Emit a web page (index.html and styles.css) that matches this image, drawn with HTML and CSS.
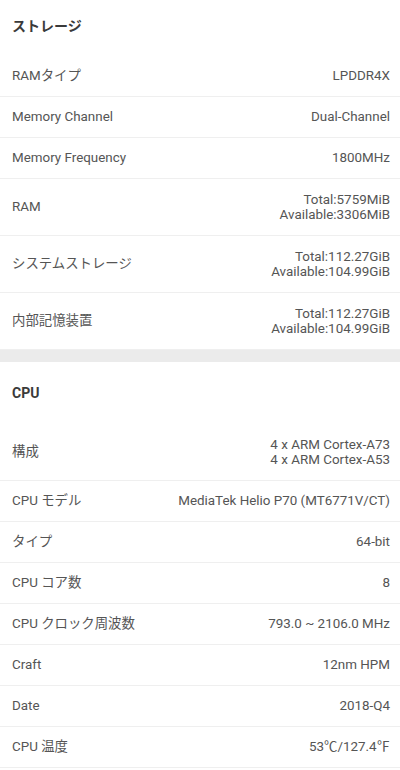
FILE: index.html
```html
<!DOCTYPE html>
<html lang="ja">
<head>
<meta charset="utf-8">
<link rel="stylesheet" href="styles.css">
</head>
<body>
<div class="page">
  <section class="section">
    <h2 class="section-title">ストレージ</h2>
    <div class="row"><span class="label">RAMタイプ</span><span class="value">LPDDR4X</span></div>
    <div class="row"><span class="label">Memory Channel</span><span class="value">Dual-Channel</span></div>
    <div class="row"><span class="label">Memory Frequency</span><span class="value">1800MHz</span></div>
    <div class="row tall"><span class="label">RAM</span><span class="value">Total:5759MiB<br>Available:3306MiB</span></div>
    <div class="row tall"><span class="label">システムストレージ</span><span class="value">Total:112.27GiB<br>Available:104.99GiB</span></div>
    <div class="row tall"><span class="label">内部記憶装置</span><span class="value">Total:112.27GiB<br>Available:104.99GiB</span></div>
  </section>
  <div class="band"></div>
  <section class="section">
    <h2 class="section-title">CPU</h2>
    <div class="row tall"><span class="label">構成</span><span class="value">4 x ARM Cortex-A73<br>4 x ARM Cortex-A53</span></div>
    <div class="row"><span class="label">CPU モデル</span><span class="value">MediaTek Helio P70 (MT6771V/CT)</span></div>
    <div class="row"><span class="label">タイプ</span><span class="value">64-bit</span></div>
    <div class="row"><span class="label">CPU コア数</span><span class="value">8</span></div>
    <div class="row"><span class="label">CPU クロック周波数</span><span class="value">793.0 ~ 2106.0 MHz</span></div>
    <div class="row"><span class="label">Craft</span><span class="value">12nm HPM</span></div>
    <div class="row"><span class="label">Date</span><span class="value">2018-Q4</span></div>
    <div class="row"><span class="label">CPU 温度</span><span class="value">53℃/127.4℉</span></div>
  </section>
</div>
</body>
</html>
```
FILE: styles.css
```css
html, body {
  margin: 0;
  padding: 0;
  background: #ffffff;
}
body {
  font-family: Roboto, "Noto Sans CJK JP", sans-serif;
  color: #555555;
  font-size: 13.4px;
  overflow: hidden;
}
.page {
  margin-top: -6px;
}
.section-title {
  margin: 0;
  height: 62px;
  display: flex;
  align-items: center;
  padding: 0 12px;
  font-size: 14px;
  font-weight: 700;
  color: #3a3a3a;
}
.row {
  display: flex;
  justify-content: space-between;
  align-items: center;
  height: 40px;
  padding: 0 10px 0 12px;
  border-bottom: 1px solid #efefef;
  line-height: 15.5px;
}
.row.tall {
  height: 56px;
}
.label {
  flex: 0 0 auto;
}
.value {
  text-align: right;
}
.band {
  height: 12px;
  background: #ebebeb;
}
```
